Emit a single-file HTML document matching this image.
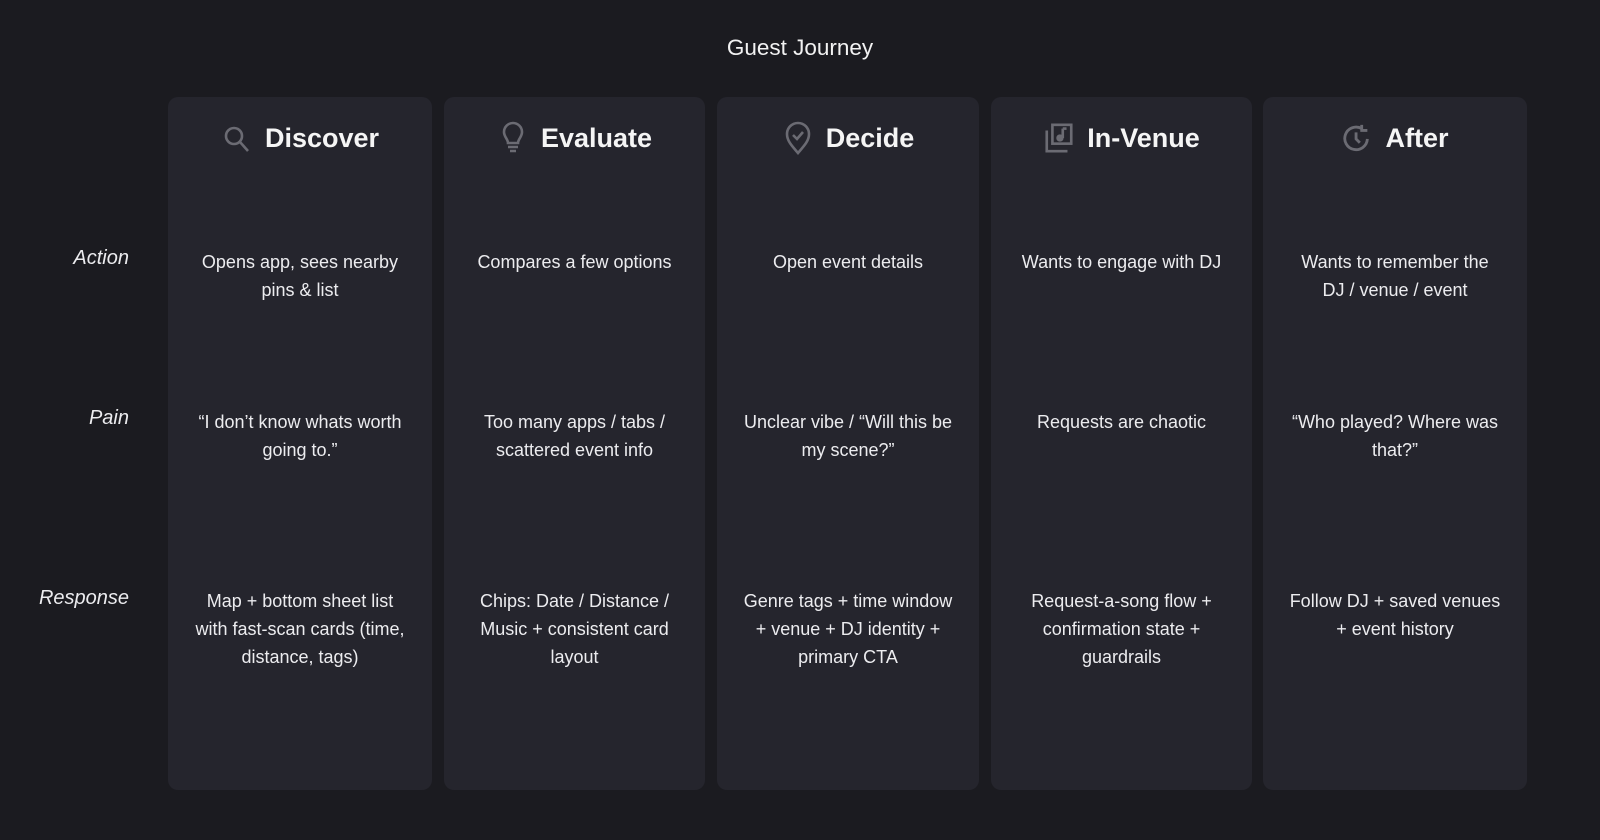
<!DOCTYPE html>
<html><head><style>
*{margin:0;padding:0;box-sizing:border-box}
body{width:1600px;height:840px;background:#1b1b20;font-family:"Liberation Sans","DejaVu Sans",sans-serif;color:#ececef;position:relative;overflow:hidden}
.t{position:absolute;top:35px;left:0;width:1600px;text-align:center;font-size:22.5px;color:#f2f2f2}
.card{position:absolute;top:97px;height:693px;background:#25252d;border-radius:10px}
.h{position:absolute;top:24px;left:0;width:100%;display:flex;justify-content:center;align-items:center;gap:12px;font-size:27px;font-weight:bold;color:#f5f5f5}
.h svg{width:32px;height:34px}
.c{position:absolute;left:24px;right:24px;text-align:center;font-size:18px;line-height:28px;color:#ececef}
.lab{position:absolute;right:1471px;font-style:italic;font-size:20px;color:#ececef}
</style></head><body>
<div class="t">Guest Journey</div>
<div class="lab" style="top:247px">Action</div>
<div class="lab" style="top:407px">Pain</div>
<div class="lab" style="top:587px">Response</div>

<div class="card" style="left:168px;width:264px">
<div class="h"><svg viewBox="0 0 30 34" fill="none" stroke="#6b6b73" stroke-width="2.6"><circle cx="12" cy="15" r="8"/><path d="M18 21l8 9"/></svg>Discover</div>
<div class="c" style="top:151px">Opens app, sees nearby pins &amp; list</div>
<div class="c" style="top:311px">“I don’t know whats worth going to.”</div>
<div class="c" style="top:490px">Map + bottom sheet list with fast-scan cards (time, distance, tags)</div>
</div>
<div class="card" style="left:444px;width:261px">
<div class="h"><svg viewBox="0 0 30 34" fill="none" stroke="#6b6b73" stroke-width="2.6"><path d="M10 22c0-4-4-6-4-11a9 9 0 0118 0c0 5-4 7-4 11z"/><path d="M10 26h10M12 30h6"/></svg>Evaluate</div>
<div class="c" style="top:151px">Compares a few options</div>
<div class="c" style="top:311px">Too many apps / tabs / scattered event info</div>
<div class="c" style="top:490px">Chips: Date / Distance / Music + consistent card layout</div>
</div>
<div class="card" style="left:717px;width:262px">
<div class="h"><svg viewBox="0 0 30 34" fill="none" stroke="#6b6b73" stroke-width="2.6"><path d="M15 32C9 25 4 20 4 13a11 11 0 0122 0c0 7-5 12-11 19z"/><path d="M10 14l4 4 6-7"/></svg>Decide</div>
<div class="c" style="top:151px">Open event details</div>
<div class="c" style="top:311px">Unclear vibe / “Will this be my scene?”</div>
<div class="c" style="top:490px">Genre tags + time window<br>+ venue + DJ identity + primary CTA</div>
</div>
<div class="card" style="left:991px;width:261px">
<div class="h"><svg viewBox="0 0 34 34" fill="none" stroke="#6b6b73" stroke-width="2.8"><rect x="10" y="3" width="20" height="20"/><path d="M4 9v22h22"/><path d="M21 7v10"/><circle cx="18" cy="17" r="2.5" fill="#6b6b73"/><path d="M21 7h4"/></svg>In-Venue</div>
<div class="c" style="top:151px">Wants to engage with DJ</div>
<div class="c" style="top:311px">Requests are chaotic</div>
<div class="c" style="top:490px">Request-a-song flow + confirmation state + guardrails</div>
</div>
<div class="card" style="left:1263px;width:264px">
<div class="h"><svg viewBox="0 0 34 34" fill="none" stroke="#6b6b73" stroke-width="3"><path d="M28 18A12 12 0 1 1 22 7"/><path d="M22 3v6h6"/><path d="M16 11v7l4 4"/></svg>After</div>
<div class="c" style="top:151px">Wants to remember the<br>DJ / venue / event</div>
<div class="c" style="top:311px">“Who played? Where was that?”</div>
<div class="c" style="top:490px">Follow DJ + saved venues<br>+ event history</div>
</div>
</body></html>
